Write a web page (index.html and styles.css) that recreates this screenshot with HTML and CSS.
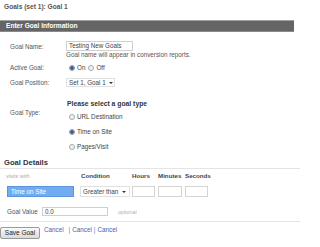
FILE: index.html
```html
<!DOCTYPE html>
<html>
<head>
<meta charset="utf-8">
<link rel="stylesheet" href="styles.css">
</head>
<body>
<div class="title">Goals (set 1): Goal 1</div>
<div class="bar">Enter Goal Information</div>
<div class="form">
  <div class="row row-name">
    <div class="label label-name">Goal Name:</div>
    <div class="field">
      <div class="box name-box">Testing New Goals</div>
      <div class="hint">Goal name will appear in conversion reports.</div>
    </div>
  </div>
  <div class="row row-active">
    <div class="label">Active Goal:</div>
    <div class="field radio-line">
      <span class="radio on"></span><span>On</span>
      <span class="radio"></span><span>Off</span>
    </div>
  </div>
  <div class="row row-pos">
    <div class="label">Goal Position:</div>
    <div class="field">
      <div class="select">Set 1, Goal 1<span class="caret"></span></div>
    </div>
  </div>
  <div class="prompt">Please select a goal type</div>
  <div class="row row-type">
    <div class="label label-type">Goal Type:</div>
    <div class="field options">
      <div class="radio-line"><span class="radio"></span><span>URL Destination</span></div>
      <div class="radio-line"><span class="radio on"></span><span>Time on Site</span></div>
      <div class="radio-line"><span class="radio"></span><span>Pages/Visit</span></div>
    </div>
  </div>
</div>
<div class="details-title">Goal Details</div>
<div class="grid head">
  <div class="visits">visits with</div>
  <div class="colhead cond">Condition</div>
  <div class="colhead">Hours</div>
  <div class="colhead">Minutes</div>
  <div class="colhead">Seconds</div>
</div>
<div class="grid data">
  <div class="blue">Time on Site</div>
  <div class="select sel2">Greater than<span class="caret"></span></div>
  <div class="num"></div>
  <div class="num n2"></div>
  <div class="num"></div>
</div>
<div class="value-row">
  <div class="vlabel">Goal Value</div>
  <div class="box value-box">0.0</div>
  <div class="optional">optional</div>
</div>
<div class="rule"></div>
<div class="actions">
  <div class="button">Save Goal</div>
  <div class="links"><a class="link">Cancel</a><span class="sep first">|</span><a class="link">Cancel</a><span class="sep">|</span><a class="link">Cancel</a></div>
</div>
</body>
</html>
```

FILE: styles.css
```css
* { box-sizing: border-box; margin: 0; padding: 0; }
body {
  margin: 0;
  width: 300px;
  height: 247px;
  overflow: hidden;
  background: #fff;
  font-family: "Liberation Sans", Arial, sans-serif;
  font-size: 6.3px;
  color: #444;
}
.title {
  height: 20px;
  padding: 3px 0 0 4px;
  font-size: 6.6px;
  font-weight: bold;
  line-height: 8px;
  color: #555;
}
.bar {
  width: 294px;
  height: 12px;
  background: #656565;
  border-top: 1px solid #a0a0a0;
  border-bottom: 1px solid #8a8a8a;
  color: #fff;
  font-size: 6.6px;
  font-weight: bold;
  line-height: 10px;
  padding-left: 6px;
}
.form { padding-left: 10px; }
.row { display: flex; }
.label {
  width: 56px;
  line-height: 8px;
  color: #555;
}
.row-name { margin-top: 9px; }
.label-name { padding-top: 2px; }
.box {
  border: 1px solid #cfcfcf;
  height: 10px;
  padding-left: 2px;
  line-height: 8px;
  color: #444;
}
.name-box { width: 67px; }
.hint { line-height: 8px; color: #555; }
.row-active { margin-top: 5px; height: 8px; align-items: center; }
.radio-line {
  display: flex;
  align-items: center;
  line-height: 8px;
  height: 8px;
}
.radio {
  width: 6px;
  height: 6px;
  border-radius: 50%;
  border: 1px solid #a8a8a8;
  background: #f2f2f2;
  margin: 0 2px 0 3px;
  flex: none;
}
.radio.on {
  border-color: #8a94a6;
  background: radial-gradient(circle, #3a5a8e 0 1.5px, #c9d3e4 2px);
}
.row-pos { margin-top: 6px; height: 9px; align-items: center; }
.select {
  display: flex;
  align-items: center;
  width: 49px;
  height: 9px;
  border: 1px solid #e0e0e0;
  padding-left: 2px;
  line-height: 7px;
  color: #444;
}
.caret {
  width: 0;
  height: 0;
  border-left: 2px solid transparent;
  border-right: 2px solid transparent;
  border-top: 2.5px solid #333;
  margin-left: 3px;
}
.prompt {
  margin-top: 13px;
  margin-left: 57px;
  font-size: 6.8px;
  font-weight: bold;
  line-height: 8px;
  color: #333;
}
.label-type { padding-top: 1px; }
.options {
  display: flex;
  flex-direction: column;
  gap: 7px;
  padding-top: 5px;
}
.details-title {
  margin-top: 7px;
  height: 11px;
  padding-left: 4px;
  font-size: 7.6px;
  font-weight: bold;
  line-height: 10px;
  color: #333;
  border-bottom: 1px solid #e4e4e4;
}
.grid {
  display: grid;
  grid-template-columns: 74px 52px 26px 27px 40px;
  padding-left: 6px;
}
.head { margin-top: 3px; height: 8px; line-height: 8px; }
.visits { font-size: 5.5px; color: #aaa; }
.colhead { font-weight: bold; color: #444; font-size: 6.2px; }
.cond { padding-left: 1px; }
.data { margin-top: 6px; height: 11px; }
.blue {
  margin-left: 1px;
  width: 67px;
  height: 11px;
  background: #72acf0;
  border: 1px solid #5a96e0;
  color: #fff;
  line-height: 9px;
  padding-left: 3px;
}
.sel2 { width: 50px; height: 11px; }
.sel2 .caret { margin-left: 4px; }
.num {
  width: 23px;
  height: 11px;
  border: 1px solid #d4d4d4;
}
.n2 { width: 24px; }
.value-row {
  margin-top: 10px;
  display: flex;
  align-items: center;
  height: 9px;
  padding-left: 7px;
}
.vlabel { width: 35px; color: #555; line-height: 8px; }
.value-box { width: 66px; height: 9px; line-height: 7px; }
.optional { margin-left: 10px; font-size: 5.3px; color: #b0b0b0; }
.rule { margin-top: 5px; border-top: 1px solid #e4e4e4; }
.actions {
  margin-top: 5px;
  display: flex;
  align-items: flex-start;
}
.button {
  width: 40px;
  height: 12px;
  border: 1px solid #9a9a9a;
  border-radius: 2px;
  background: linear-gradient(#fbfbfb, #dadada);
  color: #222;
  font-size: 6.5px;
  line-height: 10px;
  text-align: center;
}
.links {
  display: flex;
  margin-top: -1px;
  padding-left: 4px;
  line-height: 8px;
  color: #3a66b5;
}
.link { color: #3a66b5; text-decoration: none; }
.sep { margin: 0 2px 0 2px; color: #5a7cc0; }
.sep.first { margin-left: 5px; }
```
